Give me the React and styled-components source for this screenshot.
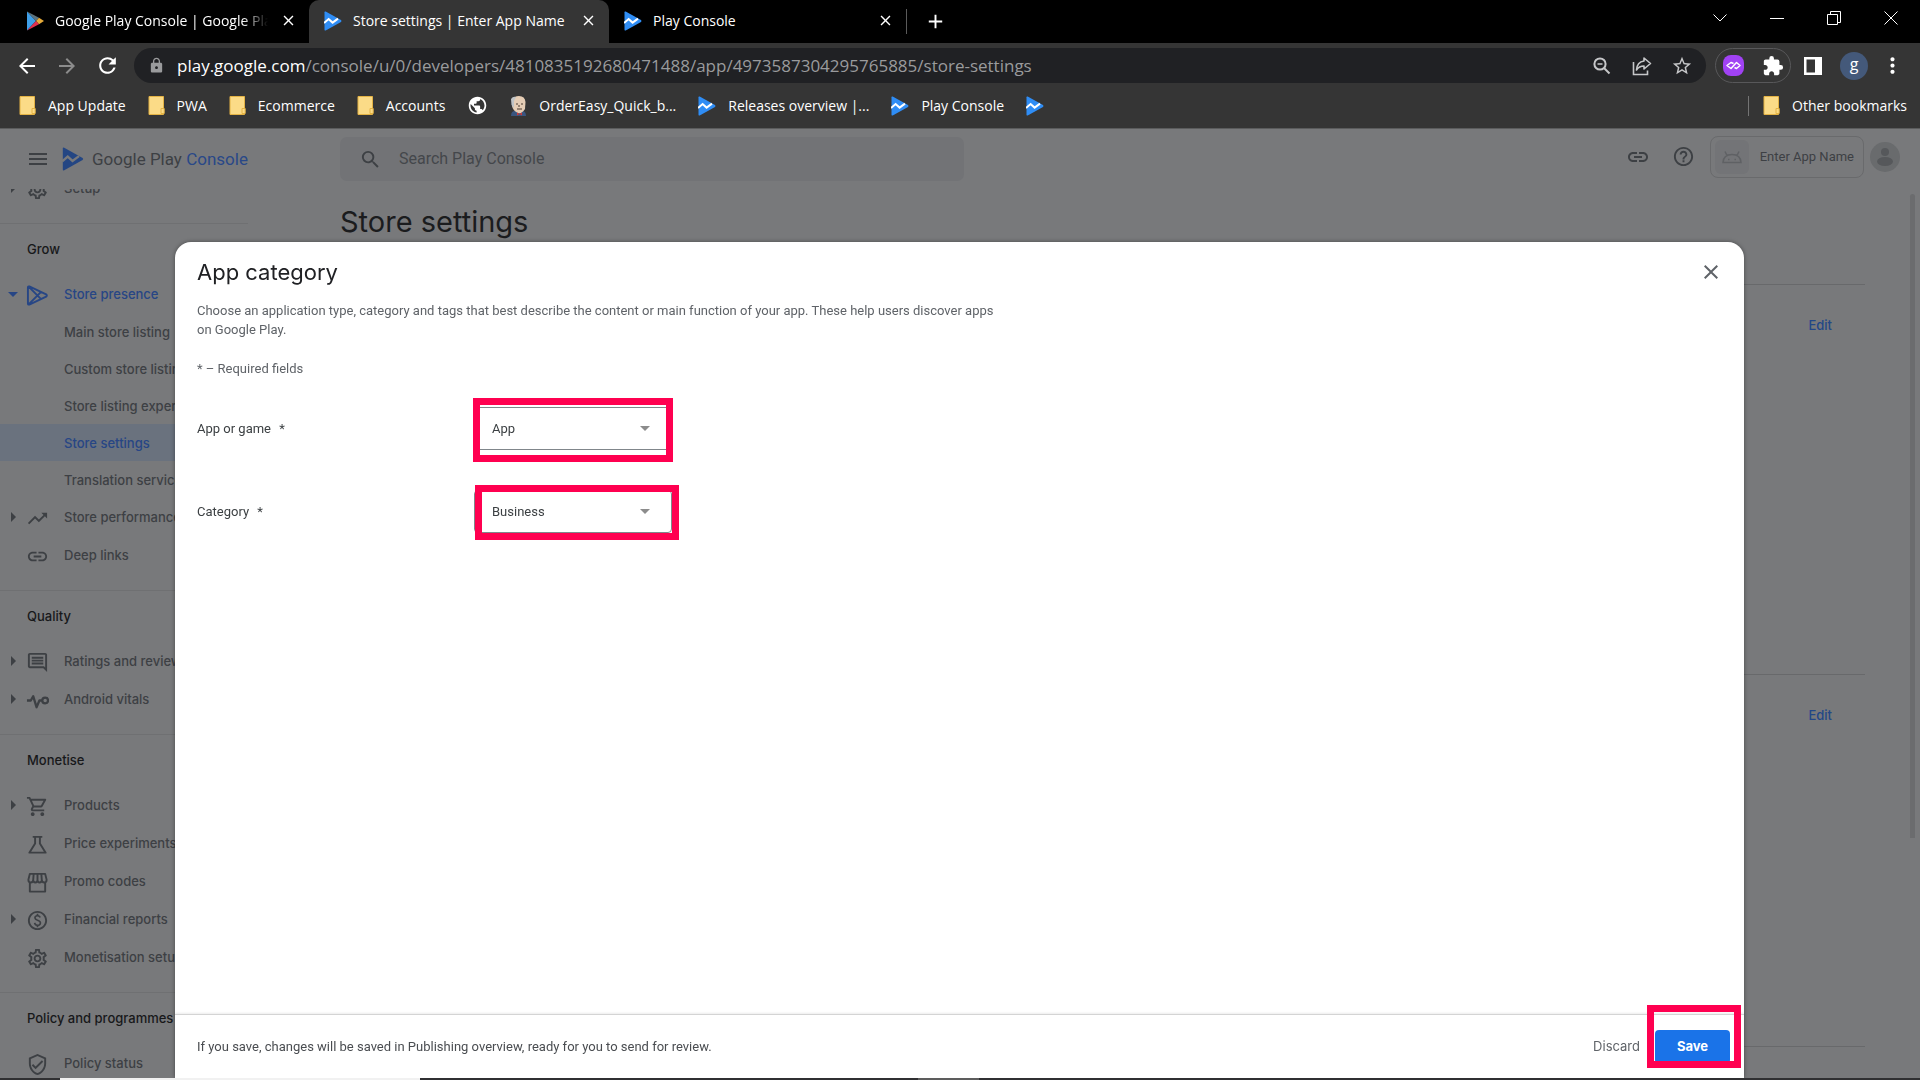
import React from "react";
import styled, { createGlobalStyle, css } from "styled-components";
import {
  MdArrowBack,
  MdArrowForward,
  MdClose,
  MdExtension,
  MdHelpOutline,
  MdLink,
  MdLock,
  MdMoreVert,
  MdOutlineComment,
  MdOutlinePaid,
  MdOutlineSettings,
  MdOutlineShoppingCart,
  MdOutlineVerifiedUser,
  MdPublic,
  MdRefresh,
  MdSearch,
  MdStarBorder,
  MdTrendingUp,
  MdAdd,
  MdMenu,
} from "react-icons/md";

const chromeFont = `"Open Sans", "Noto Sans", sans-serif`;
const brandFont = `Inter, Roboto, sans-serif`;
const textFont = `Roboto, Inter, sans-serif`;

const GlobalStyle = createGlobalStyle`
  *, *::before, *::after { box-sizing: border-box; }
  body { margin: 0; background: #78797b; font-family: ${textFont}; overflow: hidden; }
  button, input, select { font: inherit; color: inherit; }
  h1, h2, p, ul { margin: 0; padding: 0; font-weight: 400; }
  ul { list-style: none; }
  a { color: inherit; text-decoration: none; }
  svg { display: block; flex: none; }
`;

const Screen = styled.div`
  height: 100vh;
  display: flex;
  flex-direction: column;
`;

const IconButton = styled.button`
  display: flex;
  align-items: center;
  justify-content: center;
  flex: none;
  width: ${(p) => p.$w || 40}px;
  height: ${(p) => p.$h || 34}px;
  padding: 0;
  border: 0;
  background: none;
  color: ${(p) => p.$color || "inherit"};
`;

/* ---------- browser window ---------- */

const Browser = styled.header`
  flex: none;
  font-family: ${chromeFont};
  color: #fff;
  background: #353535;
  border-bottom: 1px solid #5b5c5d;
`;

const TabStrip = styled.div`
  display: flex;
  height: 43px;
  background: #000;
`;

const Tab = styled.div`
  display: flex;
  align-items: center;
  gap: 11px;
  width: ${(p) => p.$w}px;
  padding: 0 12px 2px ${(p) => p.$pad || 15}px;
  font-size: 14px;
  line-height: 20px;
  ${(p) =>
    p.$active &&
    css`
      background: #353535;
      border-radius: 10px 10px 0 0;
    `}
`;

const TabTitle = styled.span`
  flex: 1;
  overflow: hidden;
  white-space: nowrap;
  ${(p) =>
    p.$fade &&
    css`
      mask-image: linear-gradient(90deg, #000 88%, transparent);
    `}
`;

const NewTab = styled.div`
  display: flex;
  align-items: center;
  gap: 12px;
  height: 42px;
  &::before {
    content: "";
    width: 1px;
    height: 25px;
    background: #5a5a5a;
  }
`;

const WindowControls = styled.div`
  display: flex;
  margin-left: auto;
`;

const Toolbar = styled.div`
  display: flex;
  align-items: center;
  height: 45px;
  padding: 0 11px 0 7px;
`;

const AddressBar = styled.div`
  flex: 1;
  display: flex;
  align-items: center;
  height: 35px;
  margin-left: 7px;
  padding: 0 4px 0 14px;
  border-radius: 18px;
  background: #202124;
  color: #c6c7c9;
`;

const Url = styled.div`
  flex: 1;
  margin-left: 12px;
  font-size: 17px;
  line-height: 24px;
  color: #9a9b9d;
  white-space: nowrap;
  b {
    font-weight: 400;
    color: #fff;
  }
`;

const ExtensionPill = styled.div`
  display: flex;
  align-items: center;
  justify-content: space-between;
  width: 76px;
  height: 35px;
  margin: 0 2px 0 9px;
  padding: 0 6px 0 7px;
  border: 1px solid #58585a;
  border-radius: 18px;
`;

const ProfileBadge = styled.button`
  width: 28px;
  height: 28px;
  margin: 0 7px;
  padding: 0 0 3px;
  border: 0;
  border-radius: 50%;
  background: #44597a;
  font-size: 16px;
  line-height: 24px;
`;

const BookmarkBar = styled.nav`
  display: flex;
  align-items: center;
  gap: 22px;
  height: 40px;
  padding: 0 13px 5px 19px;
  font-size: 14px;
  line-height: 20px;
  white-space: nowrap;
`;

const Bookmark = styled.a`
  display: flex;
  align-items: center;
  gap: 12px;
`;

const OtherBookmarks = styled.div`
  display: flex;
  align-items: center;
  margin-left: auto;
  padding-left: 14px;
  border-left: 1px solid #747474;
`;

/* ---------- console page ---------- */

const Page = styled.div`
  flex: 1;
  min-height: 0;
  display: flex;
  flex-direction: column;
  background: #78797b;
  color: #3d4044;
`;

const AppBar = styled.div`
  flex: none;
  display: flex;
  align-items: center;
  height: 60px;
  padding: 0 20px 0 25px;
`;

const Brand = styled.a`
  display: flex;
  align-items: center;
  gap: 8px;
  width: 278px;
  margin-left: 12px;
  font-size: 17px;
  line-height: 24px;
  b {
    font-weight: 400;
    color: #294888;
  }
`;

const SearchBox = styled.label`
  display: flex;
  align-items: center;
  gap: 17px;
  flex: 0 1 624px;
  height: 44px;
  padding: 0 19px;
  border-radius: 7px;
  background: #727376;
  input {
    flex: 1;
    padding: 0;
    border: 0;
    outline: 0;
    background: none;
    font-size: 16px;
    line-height: 20px;
  }
  input::placeholder {
    color: #44474b;
    opacity: 1;
  }
`;

const AppBarActions = styled.div`
  display: flex;
  align-items: center;
  gap: 6px;
  margin-left: auto;
  padding-bottom: 5px;
`;

const AppChip = styled.button`
  display: flex;
  align-items: center;
  gap: 11px;
  height: 42px;
  padding: 0 9px 0 4px;
  border: 1px solid #696a6c;
  border-radius: 8px;
  background: none;
  font-size: 13px;
  line-height: 20px;
`;

const AppThumb = styled.span`
  display: flex;
  align-items: center;
  justify-content: center;
  width: 34px;
  height: 34px;
  border-radius: 6px;
  background: #737477;
  color: #5f6164;
`;

const Body = styled.div`
  flex: 1;
  min-height: 0;
  display: flex;
`;

const Sidebar = styled.nav`
  width: 248px;
  overflow: hidden;
  font-family: ${brandFont};
  font-size: 13px;
  font-weight: 500;
`;

const NavSection = styled.section`
  padding-bottom: 16px;
  border-top: 1px solid #6f7072;
`;

const NavScrolledSection = styled(NavSection)`
  margin-top: -20px;
  border-top: 0;
`;

const NavTitle = styled.h2`
  padding-left: 27px;
  font-size: 13px;
  font-weight: 500;
  line-height: 51px;
  color: #17181a;
`;

const NavItem = styled.a`
  display: grid;
  grid-template-columns: 26px 38px 1fr;
  align-items: center;
  height: ${(p) => (p.$child ? 37 : 38)}px;
  white-space: nowrap;
  color: ${(p) => (p.$active ? "#274685" : "#3d4044")};
  background: ${(p) => (p.$selected ? "#6a727e" : "none")};
`;

const NavIcon = styled.span`
  padding-top: 2px;
`;

const Caret = styled.span`
  justify-self: center;
  border: 5px solid transparent;
  ${(p) =>
    p.$dir === "down"
      ? css`
          border-top-color: currentColor;
          border-bottom: 0;
        `
      : css`
          border-left-color: ${p.$dir ? "currentColor" : "transparent"};
          border-right: 0;
        `}
`;

const Main = styled.main`
  flex: 1;
  padding: 15px 55px 0 92px;
`;

const PageTitle = styled.h1`
  height: 80px;
  font-family: ${brandFont};
  font-size: 29px;
  line-height: 36px;
  color: #1b1c1e;
`;

const SettingsBlock = styled.section`
  display: flex;
  justify-content: flex-end;
  height: ${(p) => p.$h}px;
  padding: 30px 33px 0 0;
  border-top: 1px solid #68696b;
  font-family: ${brandFont};
  font-size: 13px;
  font-weight: 500;
  line-height: 20px;
  color: #234787;
`;

const ScrollThumb = styled.div`
  width: 5px;
  height: 644px;
  margin: 5px 5px 0 -10px;
  border-radius: 3px 3px 0 0;
  background: #6b6c6e;
`;

/* ---------- dialog ---------- */

const Overlay = styled.div`
  position: fixed;
  inset: 242px 176px 2px 175px;
  display: flex;
`;

const Dialog = styled.div`
  flex: 1;
  display: flex;
  flex-direction: column;
  border-radius: 16px 16px 0 0;
  background: #fff;
  box-shadow: 0 0 4px rgba(0, 0, 0, 0.4);
`;

const DialogHead = styled.div`
  display: flex;
  align-items: center;
  justify-content: space-between;
  height: 59px;
  padding: 0 13px 0 22px;
`;

const DialogTitle = styled.h2`
  font-family: ${brandFont};
  font-size: 22px;
  line-height: 28px;
  color: #202124;
`;

const DialogBody = styled.div`
  flex: 1;
  padding: 0 22px;
  font-size: 13px;
  line-height: 19px;
  color: #5f6368;
`;

const Lead = styled.p`
  max-width: 800px;
  margin-bottom: 20px;
`;

const FieldRow = styled.div`
  display: grid;
  grid-template-columns: 277px 198px;
  align-items: center;
  height: 43px;
  margin-top: ${(p) => p.$gap || 40}px;
  color: #3c4043;
  label span {
    margin-left: 5px;
  }
`;

const SelectWrap = styled.div`
  position: relative;
  display: flex;
  align-items: center;
  height: 43px;
  border: 1px solid #80868b;
  border-radius: 4px;
`;

const Select = styled.select`
  flex: 1;
  height: 41px;
  padding: 0 17px;
  border: 0;
  outline: 0;
  appearance: none;
  background: none;
`;

const SelectCaret = styled.span`
  position: absolute;
  right: 21px;
  border: 5px solid transparent;
  border-top-color: #8c8c8c;
  border-bottom: 0;
  pointer-events: none;
`;

const Marker = styled.span`
  position: absolute;
  inset: ${(p) => p.$inset};
  border: 7px solid #ff0050;
  pointer-events: none;
`;

const DialogFoot = styled.div`
  display: flex;
  align-items: center;
  justify-content: space-between;
  height: 64px;
  padding: 0 14px 0 22px;
  border-top: 1px solid #d4d4d4;
  box-shadow: 0 -1px 2px rgba(0, 0, 0, 0.08);
  font-size: 13px;
  line-height: 19px;
  color: #4a4d51;
`;

const FootActions = styled.div`
  display: flex;
  align-items: center;
  gap: 15px;
  font-family: ${brandFont};
`;

const TextButton = styled.button`
  padding: 0;
  border: 0;
  background: none;
  color: #5f6368;
`;

const SaveWrap = styled.div`
  position: relative;
  display: flex;
`;

const SaveButton = styled.button`
  width: 75px;
  height: 34px;
  padding: 0;
  border: 0;
  border-radius: 4px;
  background: #1a73e8;
  color: #fff;
  font-weight: 700;
`;

const TaskbarEdge = styled.div`
  position: fixed;
  inset: auto 0 0 0;
  display: flex;
  height: 2px;
  padding-left: 60px;
  background: #303032;
`;

const TaskbarSegment = styled.span`
  width: ${(p) => p.$w}px;
  margin-right: ${(p) => p.$gap || 0}px;
  background: ${(p) => p.$color};
`;

/* ---------- drawings ---------- */

const ConsoleLogo = ({ w = 18, h = 20, fill = "#2f8df5", line = "#fff" }) => (
  <svg width={w} height={h} viewBox="0 0 18 20" aria-hidden="true">
    <path d="M0.5 1.2Q0.5 0 1.7 0.6L17 9.1Q18 10 17 10.9L1.7 19.4Q0.5 20 0.5 18.8Z" fill={fill} />
    <path d="M0 12L4.6 8L8.6 11.6L14 7.6" fill="none" stroke={line} strokeWidth="2" />
  </svg>
);

const PlayStoreLogo = () => (
  <svg width="18" height="20" viewBox="0 0 18 20" aria-hidden="true">
    <path d="M1 0.5L10 10L1 19.5Z" fill="#3f9fe8" />
    <path d="M1 0.5L13 6.8L10 10Z" fill="#5d737e" />
    <path d="M13 6.8L18 10L13 13.2L10 10Z" fill="#e5ab3a" />
    <path d="M1 19.5L13 13.2L10 10Z" fill="#e2304f" />
  </svg>
);

const Folder = () => (
  <svg width="17" height="19" viewBox="0 0 17 19" aria-hidden="true">
    <path d="M1 0.5H15.5V18.5H1Z" fill="#fbdb87" stroke="#e4b344" />
    <path d="M13 12.5H16.2V17.5H13Z" fill="#fbdb87" stroke="#e4b344" />
  </svg>
);

const Portrait = () => (
  <svg width="17" height="20" viewBox="0 0 17 20" aria-hidden="true">
    <path d="M1 20Q1 15 5 15H12Q16 15 16 20Z" fill="#39557f" />
    <path d="M2 4Q4 0 9 0Q15 0 15.5 6L15 13Q12 18 8 17Q3 15 2 10Z" fill="#e5cdb5" />
    <path d="M1 3Q3 0 6 1L4 5L4 12L1.5 9Z" fill="#bfc3c6" />
    <path d="M6 8H8M11 8H13M7 13H12M9 9V11" stroke="#4b3a30" fill="none" />
    <path d="M7 16.5L12 19.5V16.5L7 19.5Z" fill="#d33a34" />
  </svg>
);

const ZoomOutIcon = () => (
  <svg width="18" height="18" viewBox="0 0 18 18" fill="none" stroke="currentColor" strokeWidth="2" aria-hidden="true">
    <circle cx="7" cy="7" r="5.6" />
    <path d="M11 11L16.500 16.500" />
    <path d="M4.500 7H9.500" strokeWidth="1.500" />
  </svg>
);

const ShareIcon = () => (
  <svg width="20" height="20" viewBox="0 0 20 20" fill="none" stroke="currentColor" strokeWidth="1.6" aria-hidden="true">
    <path d="M1.5 6V18.5H15.5V14.500" />
    <path d="M12 2L18.5 7.5L12 13V10Q7 10 4.5 14Q5 6 12 5Z" strokeLinejoin="round" />
  </svg>
);

const PurpleExtension = () => (
  <svg width="21" height="21" viewBox="0 0 21 21" aria-hidden="true">
    <rect width="21" height="21" rx="8" fill="#a142f4" />
    <path d="M10.500 8.500L8 7.500L4 10.500L8 13.500L13.500 7.500L17 10.500L13.500 13.500L11.500 12.500" fill="none" stroke="#fff" strokeWidth="1.5" strokeLinejoin="round" />
  </svg>
);

const SidePanelIcon = () => (
  <svg width="18" height="18" viewBox="0 0 18 18" aria-hidden="true">
    <path d="M0 0H18V18H0ZM2.5 2.5V15.5H11V2.5Z" fill="#fff" fillRule="evenodd" />
  </svg>
);

const WindowIcon = ({ d }) => (
  <svg width="14" height="14" viewBox="0 0 14 14" fill="none" stroke="#fff" aria-hidden="true">
    <path d={d} />
  </svg>
);

const AndroidHead = () => (
  <svg width="20" height="14" viewBox="0 0 20 14" fill="none" stroke="currentColor" strokeWidth="1.500" aria-hidden="true">
    <path d="M1 12.500Q1.500 4.500 10 4.500Q18.500 4.500 19 12.500ZM5 5.500L3 1.500M15 5.500L17 1.500M6 9.500H7.500M12.500 9.500H14" />
  </svg>
);

const NavDrawing = ({ d, width = 2 }) => (
  <svg width="23" height="23" viewBox="0 0 24 24" fill="none" stroke="currentColor" strokeWidth={width} strokeLinejoin="round" aria-hidden="true">
    <path d={d} />
  </svg>
);

const StoreIcon = () => (
  <NavDrawing d="M3 2.8Q2 2 2 4V20Q2 22 3.5 21.4L21 13.2Q22.5 12 21 10.8L3.5 2.6ZM3 3L16 16M3 21L16 8" />
);
const VitalsIcon = () => (
  <NavDrawing width={2.4} d="M1 12H5L7.5 7.5L11 19L14 12H17M23 12A3 3 0 1 1 17 12A3 3 0 1 1 23 12" />
);
const FlaskIcon = () => <NavDrawing d="M7 4H17M9.5 4V11L3.5 20.5H20.5L14.5 11V4" />;
const PromoIcon = () => (
  <NavDrawing d="M4 3H20L21.5 9Q21.500 12 19 12Q16.500 12 16.500 9.500Q16.500 12 14.200 12Q12 12 12 9.500Q12 12 9.800 12Q7.500 12 7.500 9.500Q7.500 12 5 12Q2.500 12 2.500 9ZM8 3L7.500 9.500M12 3V9.500M16 3L16.500 9.500M4 12V21.500H20V12" />
);

const AvatarIcon = () => (
  <svg width="30" height="30" viewBox="0 0 30 30" aria-hidden="true">
    <circle cx="15" cy="15" r="15" fill="#696b6d" />
    <circle cx="15" cy="10" r="4" fill="#56585b" />
    <ellipse cx="15" cy="19.500" rx="8" ry="4.500" fill="#56585b" />
  </svg>
);

/* ---------- data ---------- */

const bookmarks = [
  { icon: <Folder />, label: "App Update" },
  { icon: <Folder />, label: "PWA" },
  { icon: <Folder />, label: "Ecommerce" },
  { icon: <Folder />, label: "Accounts" },
  { icon: <MdPublic size={21} /> },
  { icon: <Portrait />, label: "OrderEasy_Quick_b..." },
  { icon: <ConsoleLogo />, label: "Releases overview |..." },
  { icon: <ConsoleLogo />, label: "Play Console" },
  { icon: <ConsoleLogo /> },
];

const sections = [
  {
    title: "Grow",
    items: [
      { label: "Store presence", icon: <StoreIcon />, caret: "down", active: true },
      { label: "Main store listing" },
      { label: "Custom store listings" },
      { label: "Store listing experiments" },
      { label: "Store settings", active: true, selected: true },
      { label: "Translation service" },
      { label: "Store performance", icon: <MdTrendingUp size={23} />, caret: "right" },
      { label: "Deep links", icon: <MdLink size={23} /> },
    ],
  },
  {
    title: "Quality",
    items: [
      { label: "Ratings and reviews", icon: <MdOutlineComment size={23} />, caret: "right" },
      { label: "Android vitals", icon: <VitalsIcon />, caret: "right" },
    ],
  },
  {
    title: "Monetise",
    items: [
      { label: "Products", icon: <MdOutlineShoppingCart size={23} />, caret: "right" },
      { label: "Price experiments", icon: <FlaskIcon /> },
      { label: "Promo codes", icon: <PromoIcon /> },
      { label: "Financial reports", icon: <MdOutlinePaid size={23} />, caret: "right" },
      { label: "Monetisation setup", icon: <MdOutlineSettings size={23} /> },
    ],
  },
  {
    title: "Policy and programmes",
    items: [{ label: "Policy status", icon: <MdOutlineVerifiedUser size={23} /> }],
  },
];

const NavRow = ({ item }) => (
  <NavItem href="#" $active={item.active} $selected={item.selected} $child={!item.icon}>
    <Caret $dir={item.caret} />
    <NavIcon>{item.icon}</NavIcon>
    <span>{item.label}</span>
  </NavItem>
);

export default function App() {
  return (
    <Screen>
      <GlobalStyle />
      <Browser>
        <TabStrip>
          <Tab $w={309} $pad={26}>
            <PlayStoreLogo />
            <TabTitle $fade>Google Play Console | Google Play</TabTitle>
            <IconButton $w={18} $h={18} aria-label="Close tab"><MdClose size={17} /></IconButton>
          </Tab>
          <Tab $w={300} $active>
            <ConsoleLogo />
            <TabTitle>Store settings | Enter App Name</TabTitle>
            <IconButton $w={18} $h={18} aria-label="Close tab"><MdClose size={17} /></IconButton>
          </Tab>
          <Tab $w={297}>
            <ConsoleLogo />
            <TabTitle>Play Console</TabTitle>
            <IconButton $w={18} $h={18} aria-label="Close tab"><MdClose size={17} /></IconButton>
          </Tab>
          <NewTab>
            <IconButton $w={32} aria-label="New tab"><MdAdd size={23} /></IconButton>
          </NewTab>
          <WindowControls>
            <IconButton $w={57} $h={36} aria-label="Search tabs"><WindowIcon d="M0.5 3.500L7 10L13.500 3.500" /></IconButton>
            <IconButton $w={57} $h={36} aria-label="Minimise"><WindowIcon d="M0 7.500H14" /></IconButton>
            <IconButton $w={57} $h={36} aria-label="Restore"><WindowIcon d="M0.5 3.500H10.500V13.500H0.500ZM3.500 3.500V0.500H13.500V11.500H10.500" /></IconButton>
            <IconButton $w={58} $h={36} aria-label="Close window"><WindowIcon d="M0.5 0.5L13.500 13.500M13.500 0.5L0.5 13.500" /></IconButton>
          </WindowControls>
        </TabStrip>
        <Toolbar>
          <IconButton aria-label="Back"><MdArrowBack size={24} /></IconButton>
          <IconButton $color="#8c8c8c" aria-label="Forward"><MdArrowForward size={24} /></IconButton>
          <IconButton aria-label="Reload"><MdRefresh size={25} /></IconButton>
          <AddressBar>
            <MdLock size={17} color="#9a9b9d" />
            <Url><b>play.google.com</b>/console/u/0/developers/4810835192680471488/app/4973587304295765885/store-settings</Url>
            <IconButton aria-label="Zoom"><ZoomOutIcon /></IconButton>
            <IconButton aria-label="Share"><ShareIcon /></IconButton>
            <IconButton aria-label="Bookmark this page"><MdStarBorder size={22} /></IconButton>
          </AddressBar>
          <ExtensionPill>
            <PurpleExtension />
            <MdExtension size={22} />
          </ExtensionPill>
          <IconButton aria-label="Side panel"><SidePanelIcon /></IconButton>
          <ProfileBadge>g</ProfileBadge>
          <IconButton $w={34} aria-label="Menu"><MdMoreVert size={25} /></IconButton>
        </Toolbar>
        <BookmarkBar>
          {bookmarks.map((b, i) => (
            <Bookmark key={i} href="#">
              {b.icon}
              {b.label}
            </Bookmark>
          ))}
          <OtherBookmarks>
            <Bookmark href="#"><Folder />Other bookmarks</Bookmark>
          </OtherBookmarks>
        </BookmarkBar>
      </Browser>

      <Page>
        <AppBar>
          <IconButton $w={25} aria-label="Main menu"><MdMenu size={24} /></IconButton>
          <Brand href="#">
            <ConsoleLogo w={22} h={24} fill="#244683" line="#78797b" />
            <span>Google Play <b>Console</b></span>
          </Brand>
          <SearchBox>
            <MdSearch size={23} />
            <input type="search" placeholder="Search Play Console" aria-label="Search Play Console" />
          </SearchBox>
          <AppBarActions>
            <IconButton aria-label="Copy link"><MdLink size={24} /></IconButton>
            <IconButton aria-label="Help"><MdHelpOutline size={23} /></IconButton>
            <AppChip>
              <AppThumb><AndroidHead /></AppThumb>
              Enter App Name
            </AppChip>
            <IconButton $w={30} aria-label="Account"><AvatarIcon /></IconButton>
          </AppBarActions>
        </AppBar>
        <Body>
          <Sidebar>
            <NavScrolledSection>
              <NavRow item={{ label: "Setup", icon: <MdOutlineSettings size={23} />, caret: "right" }} />
            </NavScrolledSection>
            {sections.map((s) => (
              <NavSection key={s.title}>
                <NavTitle>{s.title}</NavTitle>
                {s.items.map((item) => (
                  <NavRow key={item.label} item={item} />
                ))}
              </NavSection>
            ))}
          </Sidebar>
          <Main>
            <PageTitle>Store settings</PageTitle>
            <SettingsBlock $h={390}><a href="#">Edit</a></SettingsBlock>
            <SettingsBlock $h={372}><a href="#">Edit</a></SettingsBlock>
            <SettingsBlock $h={30} />
          </Main>
          <ScrollThumb />
        </Body>
      </Page>

      <Overlay>
        <Dialog role="dialog" aria-labelledby="dialog-title">
          <DialogHead>
            <DialogTitle id="dialog-title">App category</DialogTitle>
            <IconButton $color="#5f6368" aria-label="Close"><MdClose size={24} /></IconButton>
          </DialogHead>
          <DialogBody>
            <Lead>
              Choose an application type, category and tags that best describe the content or main function of your app. These help users discover apps on Google Play.
            </Lead>
            <p>* – Required fields</p>
            <FieldRow $gap={29}>
              <label htmlFor="app-type">App or game <span>*</span></label>
              <SelectWrap>
                <Select id="app-type" defaultValue="App">
                  <option>App</option>
                  <option>Game</option>
                </Select>
                <SelectCaret />
                <Marker $inset="-10px -2px -13px -2px" />
              </SelectWrap>
            </FieldRow>
            <FieldRow>
              <label htmlFor="app-category">Category <span>*</span></label>
              <SelectWrap>
                <Select id="app-category" defaultValue="Business">
                  <option>Business</option>
                  <option>Education</option>
                </Select>
                <SelectCaret />
                <Marker $inset="-6px -8px -8px 0px" />
              </SelectWrap>
            </FieldRow>
          </DialogBody>
          <DialogFoot>
            <p>If you save, changes will be saved in Publishing overview, ready for you to send for review.</p>
            <FootActions>
              <TextButton>Discard</TextButton>
              <SaveWrap>
                <SaveButton>Save</SaveButton>
                <Marker $inset="-25px -11px -4px -8px" />
              </SaveWrap>
            </FootActions>
          </DialogFoot>
        </Dialog>
      </Overlay>
      <TaskbarEdge>
        <TaskbarSegment $w={360} $gap={498} $color="#f1f1f1" />
        <TaskbarSegment $w={61} $color="#5d5d5d" />
      </TaskbarEdge>
    </Screen>
  );
}
